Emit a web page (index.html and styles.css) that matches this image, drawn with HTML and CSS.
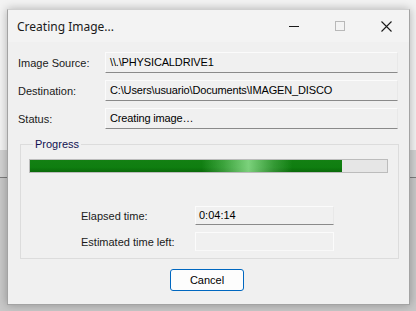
FILE: index.html
```html
<!DOCTYPE html>
<html>
<head>
<meta charset="utf-8">
<link rel="stylesheet" href="styles.css">
</head>
<body>
<div class="window">
  <div class="titlebar">
    <span class="title">Creating Image...</span>
    <div class="controls">
      <span class="ctl min"><svg width="11" height="11" viewBox="0 0 11 11"><line x1="0" y1="5.5" x2="10" y2="5.5" stroke="#1a1a1a" stroke-width="1"/></svg></span>
      <span class="ctl max"><svg width="11" height="11" viewBox="0 0 11 11"><rect x="0.5" y="0.5" width="9" height="9" fill="none" stroke="#b8b8b8" stroke-width="1"/></svg></span>
      <span class="ctl close"><svg width="11" height="11" viewBox="0 0 11 11"><path d="M0.5 0.5 L10.5 10.5 M10.5 0.5 L0.5 10.5" stroke="#1a1a1a" stroke-width="1.1"/></svg></span>
    </div>
  </div>
  <div class="content">
    <div class="rows">
      <div class="row"><span class="label">Image Source:</span><div class="field">\\.\PHYSICALDRIVE1</div></div>
      <div class="row"><span class="label">Destination:</span><div class="field">C:\Users\usuario\Documents\IMAGEN_DISCO</div></div>
      <div class="row"><span class="label">Status:</span><div class="field">Creating image…</div></div>
    </div>
    <fieldset class="group">
      <legend>Progress</legend>
      <div class="bar"><div class="fill" style="width:87.5%"></div></div>
      <div class="times">
        <div class="trow"><span class="tlabel">Elapsed time:</span><div class="tfield">0:04:14</div></div>
        <div class="trow"><span class="tlabel">Estimated time left:</span><div class="tfield empty"></div></div>
      </div>
    </fieldset>
    <div class="actions"><button class="btn">Cancel</button></div>
  </div>
</div>
</body>
</html>
```
FILE: styles.css
```css
html, body { margin: 0; padding: 0; }
body {
  width: 416px; height: 311px; overflow: hidden; position: relative;
  background: linear-gradient(#f3f3f3 0, #f3f3f3 150px, #d2d2d2 150px, #d2d2d2 177px, #7c7c7c 177px, #7c7c7c 178px, #c8c8c8 178px);
  font-family: Tahoma, "Liberation Sans", Arial, sans-serif;
  font-size: 11px; color: #000;
}
.window {
  position: absolute; left: 7px; top: 9px;
  width: 401px; height: 294px;
  border: 1px solid #a3a3a3; border-top-color: #d0d0d0;
  background: #f0f0f0;
  box-shadow: 0 0 9px rgba(0,0,0,0.28);
  display: flex; flex-direction: column;
}
.titlebar {
  height: 32px; display: flex; align-items: center; justify-content: space-between;
  background: #f3f3f3;
}
.title { font-family: "Noto Sans", "Open Sans", sans-serif; font-size: 12px; padding-left: 9px; color: #1a1a1a; }
.controls { display: flex; }
.ctl { width: 46px; height: 32px; display: flex; align-items: center; justify-content: center; }
.content { flex: 1; display: flex; flex-direction: column; padding: 10px 11px 0 10px; }
.rows { display: flex; flex-direction: column; gap: 7px; }
.row { display: flex; align-items: center; height: 21px; }
.label { width: 87px; color: #1a1a1a; }
.field {
  flex: 1; height: 19px; line-height: 19px; padding-left: 4px;
  border: 1px solid #fbfbfb; border-bottom-color: #8a8a8a; border-right-color: #e8e8e8;
  background: #f0f0f0; white-space: nowrap; overflow: hidden; letter-spacing: -0.15px;
}
.group {
  margin: 9px 0 0 2px; padding: 0 10px 0 8px; width: 379px;
  border: 1px solid #dcdcdc; height: 121px;
  box-sizing: border-box;
}
.group legend { padding: 0 2px; margin-left: 4px; color: #101050; font-size: 11px; line-height: 12px; }
.bar {
  margin-top: 9px; height: 12px; border: 1px solid #bcbcbc; background: #e6e6e6;
  overflow: hidden;
}
.fill {
  height: 100%;
  background:
    linear-gradient(90deg, rgba(255,255,255,0) 0, rgba(255,255,255,0) 55%, rgba(140,230,140,0.35) 62%, rgba(150,230,150,0.8) 70%, rgba(140,220,140,0.3) 78%, rgba(255,255,255,0) 84%),
    linear-gradient(#138013 0, #0f7e10 60%, #0a6a0a 100%);
}
.times { display: flex; flex-direction: column; gap: 7px; margin-top: 33px; }
.trow { display: flex; align-items: center; height: 19px; }
.tlabel { width: 114px; padding-left: 52px; color: #1a1a1a; }
.tfield {
  width: 134px; height: 17px; line-height: 17px; padding-left: 3px;
  border: 1px solid #fbfbfb; border-bottom-color: #8a8a8a; border-right-color: #e8e8e8;
}
.tfield.empty { border-color: #fbfbfb; border-bottom-color: #f8f8f8; }
.actions { display: flex; justify-content: center; margin-top: 10px; padding-right: 2px; }
.btn {
  width: 74px; height: 22px; border: 1px solid #0067c0; border-radius: 3px;
  background: #fdfdfd; font-family: inherit; font-size: 11px; color: #000; padding: 0;
}
```
